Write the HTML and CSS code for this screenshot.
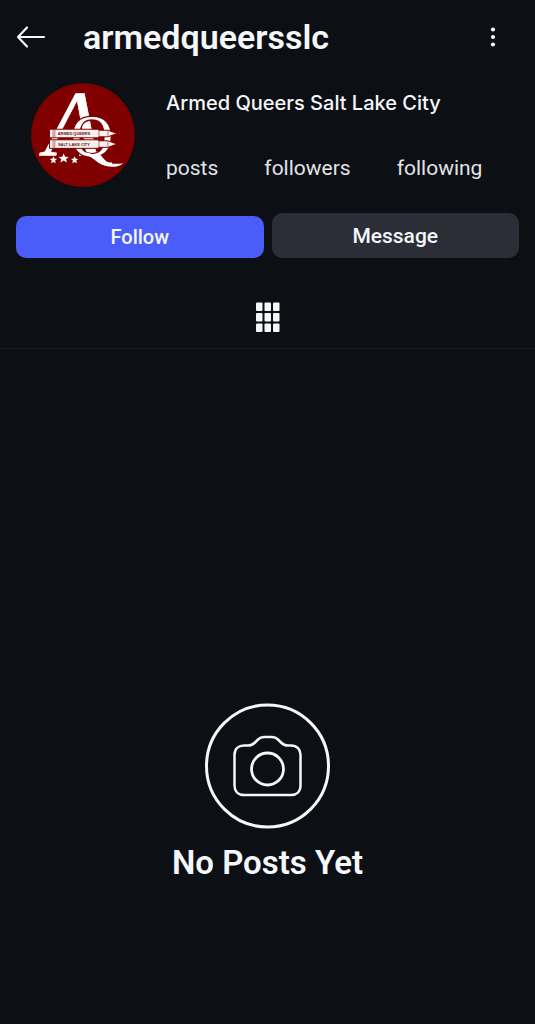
FILE: index.html
```html
<!DOCTYPE html>
<html lang="en">
  <head>
    <meta charset="UTF-8" />
    <meta name="viewport" content="width=device-width, initial-scale=1.0" />
    <title>armedqueersslc</title>
    <link rel="stylesheet" href="styles.css">
  </head>
  <body>
    <header class="topbar">
      <button class="icon-btn" type="button" aria-label="Back">
        <svg width="30" height="24" viewBox="0 0 30 24" fill="none" stroke="currentColor" stroke-width="2.200" stroke-linecap="round" stroke-linejoin="round">
          <path d="M11 2.500 2 12l9 9.500M2 12H28" />
        </svg>
      </button>
      <h1>armedqueersslc</h1>
      <button class="icon-btn" type="button" aria-label="More options">
        <svg width="20" height="24" viewBox="0 0 20 24" fill="currentColor">
          <circle cx="10" cy="4.500" r="2.100" />
          <circle cx="10" cy="12" r="2.100" />
          <circle cx="10" cy="19.500" r="2.100" />
        </svg>
      </button>
    </header>

    <main>
      <section class="profile">
        <svg class="avatar" viewBox="33 24 315 315" role="img" aria-label="Armed Queers Salt Lake City logo">
          <circle cx="190.500" cy="181.500" r="157" fill="#800000" />
          <g fill="#fff">
            <text class="logo-a" x="74" y="243">A</text>
            <text class="logo-q" x="154" y="246">Q</text>
            <path d="M190 236c32-12 54 43 122 31-20 18-56 12-78-4-15-11-26-20-44-27Z" />
            <path d="m101 246 3 7 8 1-6 5 2 8-7-4-7 4 2-8-6-5 8-1Zm31-9 4 10 11 1-8 7 3 10-10-6-10 6 3-10-8-7 11-1Zm33 9 3 7 8 1-6 5 2 8-7-4-7 4 2-8-6-5 8-1Z" />
          </g>
          <g fill="#f7eeee" stroke="#800000" stroke-width="3">
            <path d="M89 164h149v3h28l28 10-28 10h-28v3H89Z" />
            <path d="M89 196h149v3h28l28 10-28 10h-28v3H89Z" />
          </g>
          <path d="M100 166v22m5-22v22M100 198v22m5-22v22M239 168v18m27-18v18M239 200v18m27-18v18" stroke="#9e4141" stroke-width="2" />
          <g class="logo-words" fill="#5e1717">
            <text x="163" y="182">ARMED QUEERS</text>
            <text x="163" y="214">SALT LAKE CITY</text>
          </g>
        </svg>
        <div class="details">
          <h2>Armed Queers Salt Lake City</h2>
          <ul class="stats">
            <li>posts</li>
            <li>followers</li>
            <li>following</li>
          </ul>
        </div>
      </section>

      <div class="actions">
        <button class="btn follow" type="button">Follow</button>
        <button class="btn message" type="button">Message</button>
      </div>

      <nav class="tabs">
        <button class="icon-btn" type="button" aria-label="Posts grid">
          <svg width="26" height="30" viewBox="0 0 26 30" fill="currentColor">
            <rect x="1" y="0.500" width="6.500" height="8.500" rx="1" />
            <rect x="9.500" y="0.500" width="6.500" height="8.500" rx="1" />
            <rect x="18" y="0.500" width="6.500" height="8.500" rx="1" />
            <rect x="1" y="11" width="6.500" height="8.500" rx="1" />
            <rect x="9.500" y="11" width="6.500" height="8.500" rx="1" />
            <rect x="18" y="11" width="6.500" height="8.500" rx="1" />
            <rect x="1" y="21.500" width="6.500" height="8.500" rx="1" />
            <rect x="9.500" y="21.500" width="6.500" height="8.500" rx="1" />
            <rect x="18" y="21.500" width="6.500" height="8.500" rx="1" />
          </svg>
        </button>
      </nav>

      <section class="empty">
        <svg width="126" height="126" viewBox="0 0 126 126" fill="none" stroke="currentColor" aria-hidden="true">
          <circle cx="62.500" cy="63" r="61" stroke-width="3" />
          <path d="M39 42.500h4c3 0 5-1 7-3l3-3c2-2 3-2.500 6-2.500h8c3 0 4 .5 6 2.500l3 3c2 2 4 3 7 3h3c6 0 9.500 4 9.500 9v31c0 6-4 9.500-9.500 9.500H39c-6 0-9.500-4-9.500-9.500V52c0-6 4-9.500 9.500-9.500Z" stroke-width="2.500" />
          <circle cx="62.500" cy="66" r="16" stroke-width="2.800" />
        </svg>
        <h2>No Posts Yet</h2>
      </section>
    </main>
  </body>
</html>
```
FILE: styles.css
```css
* {
  box-sizing: border-box;
}

body {
  margin: 0;
  min-height: 100vh;
  background-color: #0c0f14;
  color: #f5f7fa;
  font-family: Roboto, "Liberation Sans", sans-serif;
}

h1, h2, ul {
  margin: 0;
  padding: 0;
}

button {
  border: none;
  font-family: inherit;
  color: inherit;
  cursor: pointer;
}

.icon-btn {
  display: flex;
  padding: 0;
  background: none;
}

.topbar {
  display: flex;
  align-items: center;
  height: 74px;
  padding: 0 32px 0 16px;
}

.topbar h1 {
  flex: 1;
  margin-left: 37px;
  font-size: 34px;
  font-weight: 600;
  line-height: 40px;
}

.profile {
  display: flex;
  gap: 31px;
  padding: 9px 31px 0;
}

.avatar {
  flex: none;
  width: 104px;
  height: 104px;
}

.logo-a {
  font: italic 280px "Liberation Serif", serif;
  stroke: #fff;
  stroke-width: 2px;
}

.logo-q {
  font: 176px "Liberation Serif", serif;
  stroke: #800000;
  stroke-width: 8px;
  paint-order: stroke;
}

.logo-words {
  font: bold 12px "Liberation Sans", sans-serif;
  text-anchor: middle;
}

.details h2 {
  margin-top: 7px;
  font-family: Inter, sans-serif;
  font-size: 20px;
  font-weight: 500;
  line-height: 26px;
}

.stats {
  display: flex;
  gap: 46px;
  margin-top: 39px;
  list-style: none;
  font-size: 21px;
  line-height: 26px;
  color: #e1e4e8;
}

.actions {
  display: flex;
  align-items: flex-end;
  gap: 8px;
  padding: 26px 16px 0;
}

.btn {
  flex: 1;
  height: 45px;
  border-radius: 10px;
  font-size: 20px;
  font-weight: 500;
}

.follow {
  height: 42px;
  background-color: #4a5df9;
}

.message {
  background-color: #2b2e36;
  font-size: 21px;
}

.tabs {
  display: flex;
  justify-content: center;
  padding: 44px 0 16px;
  border-bottom: 1px solid #171a1f;
}

.empty {
  display: flex;
  flex-direction: column;
  align-items: center;
  gap: 14px;
  padding: 354px 16px 32px;
}

.empty h2 {
  font-size: 33px;
  font-weight: 600;
  line-height: 40px;
}
```
